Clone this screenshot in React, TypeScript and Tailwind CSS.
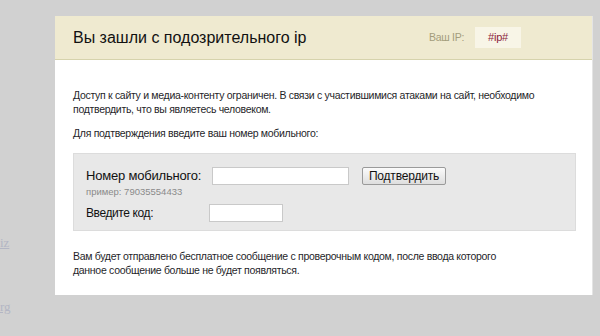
export default function App() {
    return (
        <div className="flex h-[336px] w-[600px] overflow-hidden bg-[#d1d1d1] font-['Liberation_Sans',Arial,sans-serif]">
            {/* Left column with faded links */}
            <div className="flex w-[55px] shrink-0 flex-col">
                <span className="mt-[235px] font-['Liberation_Serif',serif] text-[13px] leading-[15px] text-[#b3b6c4] underline">
                    iz
                </span>
                <span className="mt-[49px] font-['Liberation_Serif',serif] text-[13px] leading-[15px] text-[#b3b6c4] underline">
                    rg
                </span>
            </div>

            {/* Card */}
            <div className="mt-[16px] h-[279px] w-[538px] shrink-0 border-r border-[#e4e4e4] bg-white">
                {/* Header */}
                <div className="flex h-[44px] items-center border-b border-[#d6d3ac] bg-[#efead0] pl-[18px] pr-[71px]">
                    <h1 className="text-[16px] text-[#111]">Вы зашли с подозрительного ip</h1>
                    <span className="ml-auto text-[10.5px] tracking-[-0.3px] text-[#a39c7c]">Ваш IP:</span>
                    <div className="ml-[11px] flex h-[21px] w-[46px] items-center justify-center bg-[#f8f5e7] text-[11px] tracking-[-0.2px] text-[#8c1d3c]">
                        #ip#
                    </div>
                </div>

                {/* Body */}
                <div className="px-[18px] pt-[28px] text-[10.5px] leading-[14px] tracking-[-0.3px] text-[#1f1f2a]">
                    <p>
                        Доступ к сайту и медиа-контенту ограничен. В связи с участившимися атаками на сайт, необходимо
                        <br />
                        подтвердить, что вы являетесь человеком.
                    </p>
                    <p className="mt-[10px]">Для подтверждения введите ваш номер мобильного:</p>

                    {/* Form box */}
                    <div className="mt-[13px] h-[78px] w-[503px] border border-[#dcdcdc] bg-[#e8e8e8] pl-[12px] pt-[13px] tracking-normal">
                        <div className="flex items-center">
                            <span className="w-[126px] whitespace-nowrap text-[13px] tracking-[-0.2px] text-[#111]">
                                Номер мобильного:
                            </span>
                            <input
                                type="text"
                                className="h-[18px] w-[137px] border border-[#c9c9c9] bg-white outline-none"
                            />
                            <button className="ml-[13px] h-[18px] w-[84px] rounded-[2px] border border-[#9a9a9a] bg-gradient-to-b from-[#fbfbfb] to-[#dedede] text-[12px] leading-[16px] tracking-[-0.2px] text-[#111]">
                                Подтвердить
                            </button>
                        </div>
                        <div className="mt-[1px] text-[9.5px] leading-[11px] text-[#8a8a8a]">пример: 79035554433</div>
                        <div className="mt-[7px] flex items-center">
                            <span className="w-[123px] whitespace-nowrap text-[12px] tracking-[-0.4px] text-[#111]">
                                Введите код:
                            </span>
                            <input
                                type="text"
                                className="h-[18px] w-[74px] border border-[#c9c9c9] bg-white outline-none"
                            />
                        </div>
                    </div>

                    <p className="mt-[18px]">
                        Вам будет отправлено бесплатное сообщение с проверочным кодом, после ввода которого
                        <br />
                        данное сообщение больше не будет появляться.
                    </p>
                </div>
            </div>
        </div>
    );
}
